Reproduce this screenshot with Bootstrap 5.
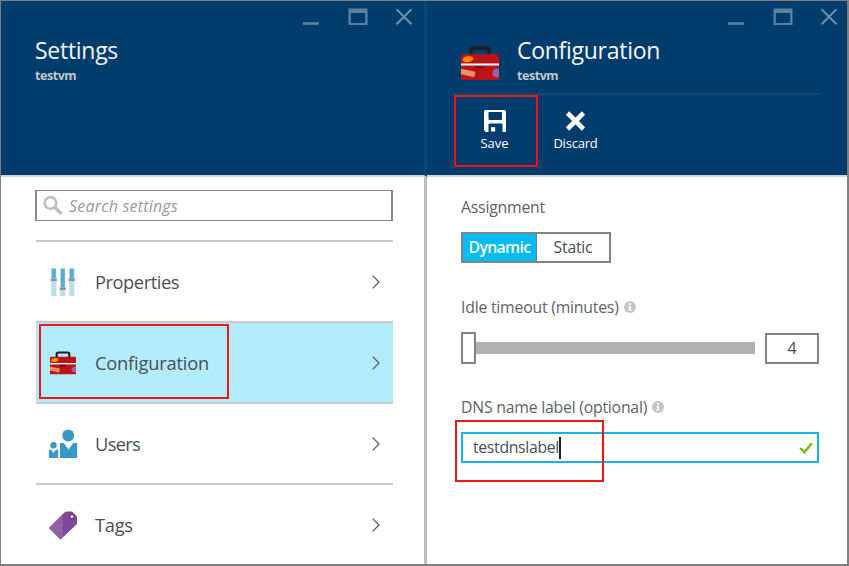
<!DOCTYPE html>
<html lang="en">
<head>
<meta charset="utf-8">
<title>Configuration</title>
<link href="https://cdn.jsdelivr.net/npm/bootstrap@5.3.0/dist/css/bootstrap.min.css" rel="stylesheet">
<style>
body{width:849px;height:566px;overflow:hidden;font-family:"Open Sans","Noto Sans",sans-serif;color:#4b4e54;background:#fff}
svg{display:block;flex:none}
.frame{width:849px;height:566px;border:solid #808080;border-width:1px 2px 2px 1px}
.pane-left{width:426px;border-right:3px solid #bfbfbf}
.pane-right{width:420px}
.head{height:176px;background:#003c6c;border-bottom:2px solid #d2d4d6}
.pane-left .head{width:426px;border-right:3px solid #00457f}
.controls{height:35px;padding-top:6px;padding-right:11px;gap:27px}
.pane-right .controls{padding-right:9px}
.ttl{font-size:23px;line-height:28px;color:#f4f7fa;font-weight:400;letter-spacing:-.28px}
.subt{font-size:12.5px;line-height:18px;font-weight:700;color:#c3c5c7;margin-top:3px;letter-spacing:-.45px}
.left-title{padding-left:34px}
.right-title{padding-left:34px;height:57px}
.right-title svg{margin:10px 18px 0 0}
.cmds{margin:0 26px 0 27px;border-top:2px solid #16486f;padding-top:15px}
.cmd{width:81px;font-size:13px;line-height:18px;color:#fff}
.cmd svg{margin-bottom:2px}
.left-body{padding:13px 31px 0 34px}
.search{height:31px;border:1px solid #85888c;border-left-width:2px;border-right-width:2px;font-size:16px;color:#96999c;letter-spacing:.2px;padding-left:6px}
.search svg{margin-right:6px}
.items{margin:19px 0 0 1px}
.item{height:81px;border-top:2px solid #c9c9c9;font-size:18.3px;line-height:26px;font-weight:400;color:#4b4f57;padding:0 13px 0 11px}
.item.on{background:#b2ebfa}
.ico{width:32px;margin-right:16px}
.right-body{padding:19px 28px 0 34px}
.lbl{font-size:15.8px;line-height:22px;color:#606367;letter-spacing:-.22px;gap:5px}
.seg{width:150px;height:31px;border:2px solid #80858a;font-size:15.8px;line-height:26px;margin-top:14px;letter-spacing:-.22px}
.seg-on{width:74px;background:#00bcf2;color:#fff;border-right:1px solid #777;font-weight:600;letter-spacing:-.65px}
.knob{width:15px;height:32px;border:2px solid #80858a;background:#fff}
.trk{width:279px;height:12px;background:#b2b2b2}
.num{width:54px;height:31px;border:2px solid #80858a;font-size:16px;line-height:27px}
.dns{width:358px;height:31px;border:2px solid #14b5ee;font-size:15.8px;color:#4b4e54;letter-spacing:-.32px;padding:0 4px 0 10px;margin-top:14px}
.caret{width:2px;height:22px;background:#222}
.mk{position:absolute;border:2px solid #ee1515;pointer-events:none}
.mk-save{left:453px;top:94px;width:84px;height:72px}
.mk-config{left:38px;top:323px;width:190px;height:75px}
.mk-dns{left:454px;top:419px;width:149px;height:62px}
</style>
<script src="https://cdn.jsdelivr.net/npm/bootstrap@5.3.0/dist/js/bootstrap.bundle.min.js"></script>
</head>
<body>
<svg width="0" height="0" class="position-absolute">
<symbol id="case" viewBox="0 0 37 34"><path d="M9.500 9V4.500Q9.500 2 12 2H25Q27.500 2 27.500 4.500V9" fill="none" stroke="#1e1e1e" stroke-width="3"/><path d="M0 10Q0 8 2 8H35Q37 8 37 10V33H0Z" fill="#ba141a"/><ellipse cx="6.800" cy="12.800" rx="5.300" ry="2.800" fill="#ff8c00" transform="rotate(-10 6.800 12.800)"/><path d="M0 22L14 25L13 30.500L0 27.500Z" fill="#e8925f"/><path d="M37 22.500A4.300 4.300 0 1 0 37 30Z" fill="#9b5fb0"/><path d="M0 17H37V19H0Z" fill="#fff"/><path d="M14 19.500H22.500V22H14Z" fill="#7a0d10"/></symbol>
<symbol id="min" viewBox="0 0 20 20"><path d="M2 16.500H18" stroke="#5c82a2" stroke-width="2.600"/></symbol>
<symbol id="max" viewBox="0 0 20 20"><path d="M.5 1.500H19.500V18H.5ZM2.800 6V16H17.200V6Z" fill="#5c82a2" fill-rule="evenodd"/></symbol>
<symbol id="cls" viewBox="0 0 18 20"><path d="M1.500 2.200L16.500 17.200M16.500 2.200L1.500 17.200" stroke="#6f90ac" stroke-width="2"/></symbol>
<symbol id="chev" viewBox="0 0 8 14"><path d="M.7 .7L7 7L.7 13.300" fill="none" stroke="#50555c" stroke-width="1.200"/></symbol>
<symbol id="info" viewBox="0 0 12 12"><circle cx="6" cy="6" r="6" fill="#c6c6c6"/><path d="M5.100 2.300H6.900V3.900H5.100ZM4.400 5H6.900V8.600H7.600V9.600H4.400V8.600H5.100V6H4.400Z" fill="#fff"/></symbol>
</svg>
<div class="frame d-flex position-relative">
<section class="pane-left">
 <header class="head">
  <div class="controls d-flex justify-content-end"><svg width="20" height="20"><use href="#min"/></svg><svg width="20" height="20"><use href="#max"/></svg><svg width="18" height="20"><use href="#cls"/></svg></div>
  <div class="left-title"><div class="ttl">Settings</div><div class="subt">testvm</div></div>
 </header>
 <div class="left-body">
  <div class="search d-flex align-items-center fst-italic"><svg width="20" height="20" viewBox="0 0 20 20"><circle cx="7.500" cy="7" r="5.800" fill="none" stroke="#bdbfc1" stroke-width="2.600"/><path d="M11.500 11L18.500 18" stroke="#bdbfc1" stroke-width="3.400"/></svg>Search settings</div>
  <div class="items">
   <div class="item d-flex align-items-center"><div class="ico"><svg width="32" height="28" viewBox="0 0 32 28"><path d="M4 0H9.500V28H4ZM13 0H18.500V28H13ZM22 0H27.500V28H22Z" fill="#dcdcdc"/><path d="M4.800 12H8.800V28H4.800ZM13.800 21H17.800V28H13.800ZM22.800 12H26.800V28H22.800Z" fill="#b5dfee"/><path d="M4.800 .8H8.800V10.500H4.800ZM13.800 .8H17.800V19.500H13.800ZM22.800 .8H26.800V10.500H22.800Z" fill="#4fb0da"/><path d="M3.700 10.500H9.800V13H3.700ZM12.700 19.500H18.800V22H12.700ZM21.700 10.500H27.800V13H21.700Z" fill="#8f9497"/></svg></div><span style="letter-spacing:-.45px">Properties</span><svg class="ms-auto" width="8" height="14"><use href="#chev"/></svg></div>
   <div class="item on d-flex align-items-center"><div class="ico"><svg width="26" height="24" style="margin-left:3px"><use href="#case"/></svg></div><span style="letter-spacing:-.2px">Configuration</span><svg class="ms-auto" width="8" height="14"><use href="#chev"/></svg></div>
   <div class="item d-flex align-items-center"><div class="ico"><svg width="32" height="30" viewBox="0 0 32 30"><g fill="#3999c6"><circle cx="21.200" cy="6.500" r="6"/><path d="M13 14H16.700L21.500 20.500L26.300 14H30.200V29H13Z"/><circle cx="6.500" cy="16.200" r="3.200"/><path d="M1.900 20.800H4.200L6.500 24L8.800 20.800H11.200V29H1.900Z"/></g></svg></div><span style="letter-spacing:-.7px">Users</span><svg class="ms-auto" width="8" height="14"><use href="#chev"/></svg></div>
   <div class="item d-flex align-items-center"><div class="ico"><svg width="32" height="30" viewBox="1 0 32 30"><path d="M3 18L18.500 2.500Q19.500 1.500 21 1.500H26L31 6.500V12.500Q31 14 30 15L14.500 29.500Z" fill="#804998"/><path d="M3 18L17 4V27L14.500 29.500Z" fill="#925fa5"/><circle cx="26" cy="6.500" r="2.200" fill="#fff" stroke="#5a3070" stroke-width="1.200"/></svg></div><span style="letter-spacing:-.3px">Tags</span><svg class="ms-auto" width="8" height="14"><use href="#chev"/></svg></div>
  </div>
 </div>
</section>
<section class="pane-right">
 <header class="head">
  <div class="controls d-flex justify-content-end"><svg width="20" height="20"><use href="#min"/></svg><svg width="20" height="20"><use href="#max"/></svg><svg width="18" height="20"><use href="#cls"/></svg></div>
  <div class="right-title d-flex"><svg width="38" height="35"><use href="#case"/></svg><div><div class="ttl">Configuration</div><div class="subt">testvm</div></div></div>
  <div class="cmds d-flex">
   <div class="cmd d-flex flex-column align-items-center"><svg width="22" height="22" viewBox="0 0 22 22"><path d="M0 1.500Q0 0 1.500 0H20.500Q22 0 22 1.500V22H18.500V14.500Q18.500 13.500 17.500 13.500H5.500Q4.500 13.500 4.500 14.500V22H1.800L0 20.200ZM4.500 2V9Q4.500 10 5.500 10H17Q18 10 18 9V2Z" fill="#fff" fill-rule="evenodd"/><path d="M7 17.200H11.200V21.500H7Z" fill="#fff"/></svg>Save</div>
   <div class="cmd d-flex flex-column align-items-center"><svg width="22" height="22" viewBox="0 0 22 22"><path d="M2.500 3L18.500 19M18.500 3L2.500 19" stroke="#fff" stroke-width="4.600"/></svg><span style="letter-spacing:-.2px">Discard</span></div>
  </div>
 </header>
 <div class="right-body">
  <div class="lbl">Assignment</div>
  <div class="seg d-flex text-center"><div class="seg-on">Dynamic</div><div class="flex-fill">Static</div></div>
  <div class="lbl d-flex align-items-center" style="margin-top:33px">Idle timeout (minutes)<svg width="12" height="12"><use href="#info"/></svg></div>
  <div class="d-flex align-items-center" style="margin-top:14px"><div class="knob"></div><div class="trk"></div><div class="num text-center ms-auto">4</div></div>
  <div class="lbl d-flex align-items-center" style="margin-top:32px">DNS name label (optional)<svg width="12" height="12"><use href="#info"/></svg></div>
  <div class="dns d-flex align-items-center">testdnslabel<div class="caret"></div><svg class="ms-auto" width="14" height="12" viewBox="0 0 14 12"><path d="M1.200 6L5.500 10.200L12.800 1.200" fill="none" stroke="#76b800" stroke-width="2.400"/></svg></div>
 </div>
</section>
<div class="mk mk-save"></div><div class="mk mk-config"></div><div class="mk mk-dns"></div>
</div>
</body></html>
